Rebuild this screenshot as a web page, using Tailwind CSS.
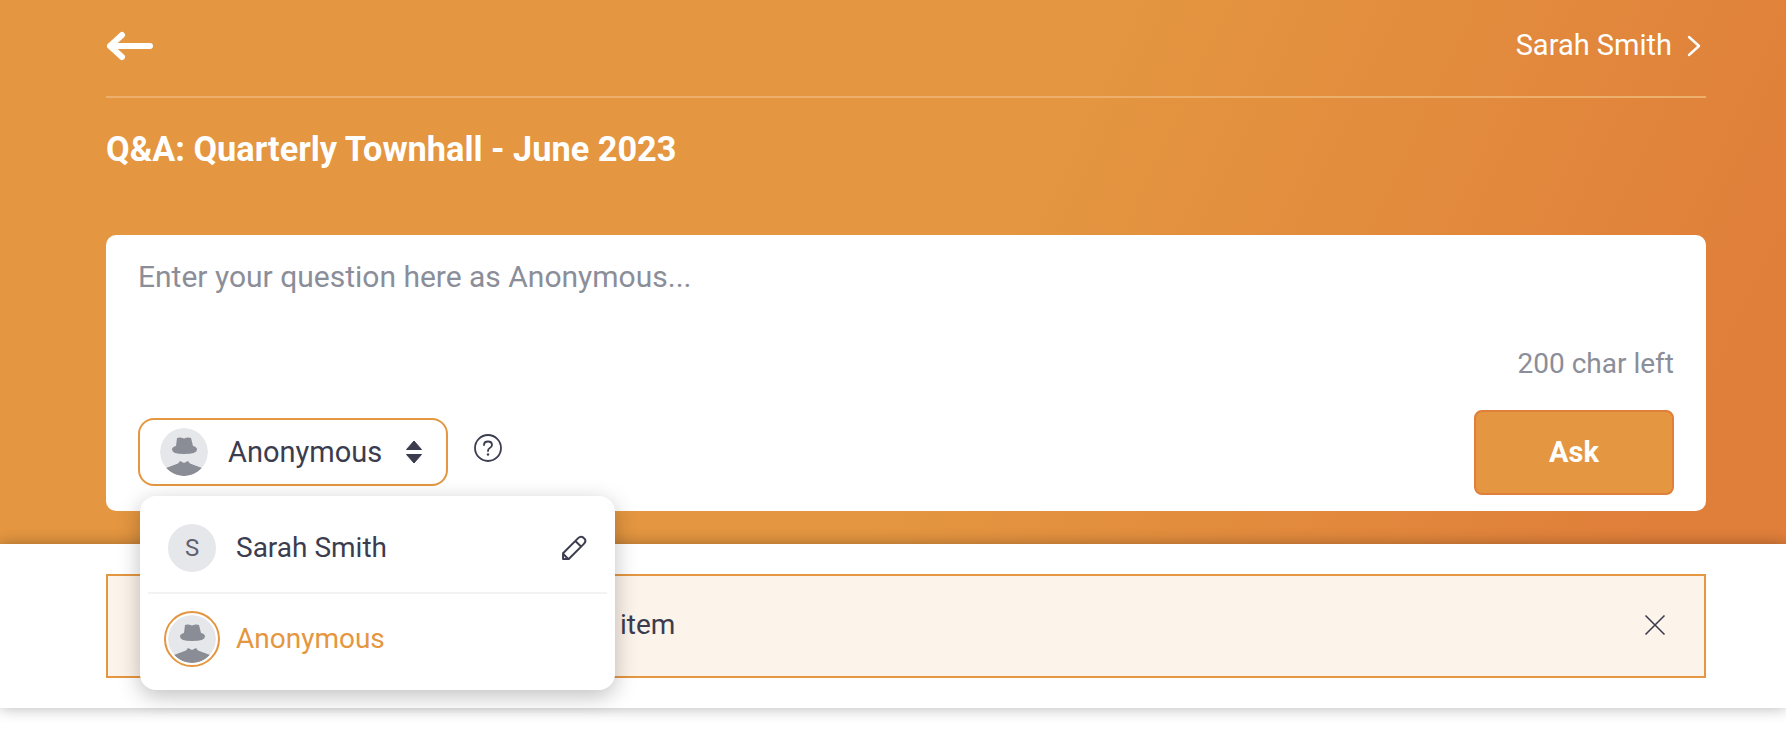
<!DOCTYPE html>
<html lang="en">
    <head>
        <meta charset="UTF-8" />
        <meta name="viewport" content="width=device-width, initial-scale=1.0" />
        <title>Q&amp;A: Quarterly Townhall</title>
        <script src="https://cdn.jsdelivr.net/npm/@tailwindcss/browser@4"></script>
    </head>
    <body class="bg-white h-screen overflow-hidden font-['Roboto',sans-serif] text-[#3b3d4f]">
        <header class="h-[544px] pl-[106px] pr-[80px] bg-[linear-gradient(115deg,#e49640_55%,#e07f3a_93%)]">
            <div class="h-[98px] flex items-center justify-between border-b-2 border-[#ecb06c] pb-[6px]">
                <a href="#" aria-label="Back" class="mt-[2px]">
                    <svg class="w-[48px] h-[30px]" viewBox="0 0 48 30" fill="none" stroke="white" stroke-width="6" stroke-linecap="round" stroke-linejoin="round">
                        <path d="M16 4 L4 15 L16 26 M4 15 H44" />
                    </svg>
                </a>
                <div class="flex items-center gap-[15px] text-white text-[29px]">
                    <span class="mt-[2px]">Sarah Smith</span>
                    <svg class="w-[14px] h-[22px] mr-[5px] mt-[2px]" viewBox="0 0 14 22" fill="none" stroke="white" stroke-width="2.400" stroke-linecap="round" stroke-linejoin="round">
                        <path d="M2 2 L12 11 L2 20" />
                    </svg>
                </div>
            </div>
            <h1 class="mt-[31px] text-[34.3px] leading-[40px] font-bold text-white">Q&amp;A: Quarterly Townhall - June 2023</h1>
            <div class="mt-[66px] h-[276px] bg-white rounded-[10px] px-[32px] pt-[23px] pb-[16px] flex flex-col">
                <p class="text-[30px] leading-[38px] text-[#8b8e99]">Enter your question here as Anonymous...</p>
                <p class="mt-[52px] text-right text-[28px] leading-[32px] text-[#8b8e99]">200 char left</p>
                <div class="mt-auto flex items-center justify-between">
                    <div class="flex items-center gap-[26px] mb-[1px]">
                        <div class="relative">
                            <button class="w-[310px] h-[68px] border-2 border-[#e49640] rounded-[16px] pl-[20px] pr-[24px] flex items-center text-[29px]">
                                <svg class="w-[48px] h-[48px] rounded-full" viewBox="0 0 48 48">
                                    <circle cx="24" cy="24" r="24" fill="#e6e7ea" />
                                    <path fill="#8a8d96" d="M17 10 Q20 9 24 10.500 Q28 9 31 10 L33 18 Q37 19 37 21.500 Q37 26 24 26 Q12 26 12 21.500 Q12 19 16 18 Z" />
                                    <path fill="#8a8d96" d="M6 40 L18 35.500 L20 33 L24 35 L28 33 L30 35.500 L42 40 A24 24 0 0 1 6 40 Z" />
                                </svg>
                                <span class="ml-[20px] mt-[2px]">Anonymous</span>
                                <svg class="ml-auto w-[16px] h-[24px]" viewBox="0 0 16 24" fill="#3b3d4f">
                                    <path d="M8 1 L15.500 9.500 H0.500 Z M0.500 14.500 H15.500 L8 23 Z" stroke="#3b3d4f" stroke-linejoin="round" />
                                </svg>
                            </button>
                            <div class="absolute z-10 left-[2px] top-[78px] w-[475px] h-[194px] bg-white rounded-[16px] shadow-[0_6px_22px_rgba(0,0,0,0.25)] px-[8px] flex flex-col">
                                <div class="h-[98px] flex items-center pt-[7px] pl-[20px] pr-[20px] border-b-2 border-[#f3f3f5]">
                                    <span class="w-[48px] h-[48px] rounded-full bg-[#e6e7ea] flex items-center justify-center text-[24px] text-[#5f6170]">S</span>
                                    <span class="ml-[20px] text-[28px] mt-[1px]">Sarah Smith</span>
                                    <svg class="ml-auto w-[25px] h-[25px]" viewBox="0 0 24 24" fill="none" stroke="#3b3d4f" stroke-width="1.900" stroke-linejoin="round">
                                        <path d="M1 23 V17.500 L15.500 3 Q18 0.500 20.500 2.500 L21.800 3.800 Q23.500 6 21 8.500 L6.500 23 Z M12.800 5.700 L18.500 11.200 M1 18 L6 23" />
                                    </svg>
                                </div>
                                <div class="flex-1 flex items-center pl-[16px] pb-[6px]">
                                    <span class="w-[56px] h-[56px] rounded-full border-2 border-[#e49640] flex items-center justify-center">
                                        <svg class="w-[48px] h-[48px] rounded-full" viewBox="0 0 48 48">
                                            <circle cx="24" cy="24" r="24" fill="#e6e7ea" />
                                            <path fill="#8a8d96" d="M17 10 Q20 9 24 10.500 Q28 9 31 10 L33 18 Q37 19 37 21.500 Q37 26 24 26 Q12 26 12 21.500 Q12 19 16 18 Z" />
                                            <path fill="#8a8d96" d="M6 40 L18 35.500 L20 33 L24 35 L28 33 L30 35.500 L42 40 A24 24 0 0 1 6 40 Z" />
                                        </svg>
                                    </span>
                                    <span class="ml-[16px] text-[28px] text-[#e49640]">Anonymous</span>
                                </div>
                            </div>
                        </div>
                        <svg class="w-[28px] h-[28px] mb-[9px]" viewBox="0 0 28 28" fill="none" stroke="#3b3d4f" stroke-width="1.800" stroke-linecap="round">
                            <circle cx="14" cy="14" r="13" />
                            <path d="M10 11 Q10 7.500 14 7.500 Q18 7.500 18 11 Q18 13 15.500 14.200 Q14 15 14 17" />
                            <path d="M14 20.500 V20.600" stroke-width="2.400" />
                        </svg>
                    </div>
                    <button class="w-[200px] h-[85px] bg-[#e49640] border-2 border-[#e07f3a] rounded-[8px] text-white text-[29px] font-bold">Ask</button>
                </div>
            </div>
        </header>
        <section class="relative z-[1] h-[164px] bg-white pl-[106px] pr-[80px] pt-[30px] shadow-[0_0_14px_rgba(0,0,0,0.3)]">
            <div class="h-[104px] bg-[#fcf3ea] border-2 border-[#e49640] flex items-center justify-between pb-[2px] pl-[113px] pr-[38px]">
                <span class="text-[28px]">Your question was added to the item</span>
                <svg class="w-[22px] h-[22px] mb-[1px]" viewBox="0 0 22 22" fill="none" stroke="#3b3d4f" stroke-width="1.600">
                    <path d="M1.500 1.500 L20.500 20.500 M20.500 1.500 L1.500 20.500" />
                </svg>
            </div>
        </section>
    </body>
</html>
